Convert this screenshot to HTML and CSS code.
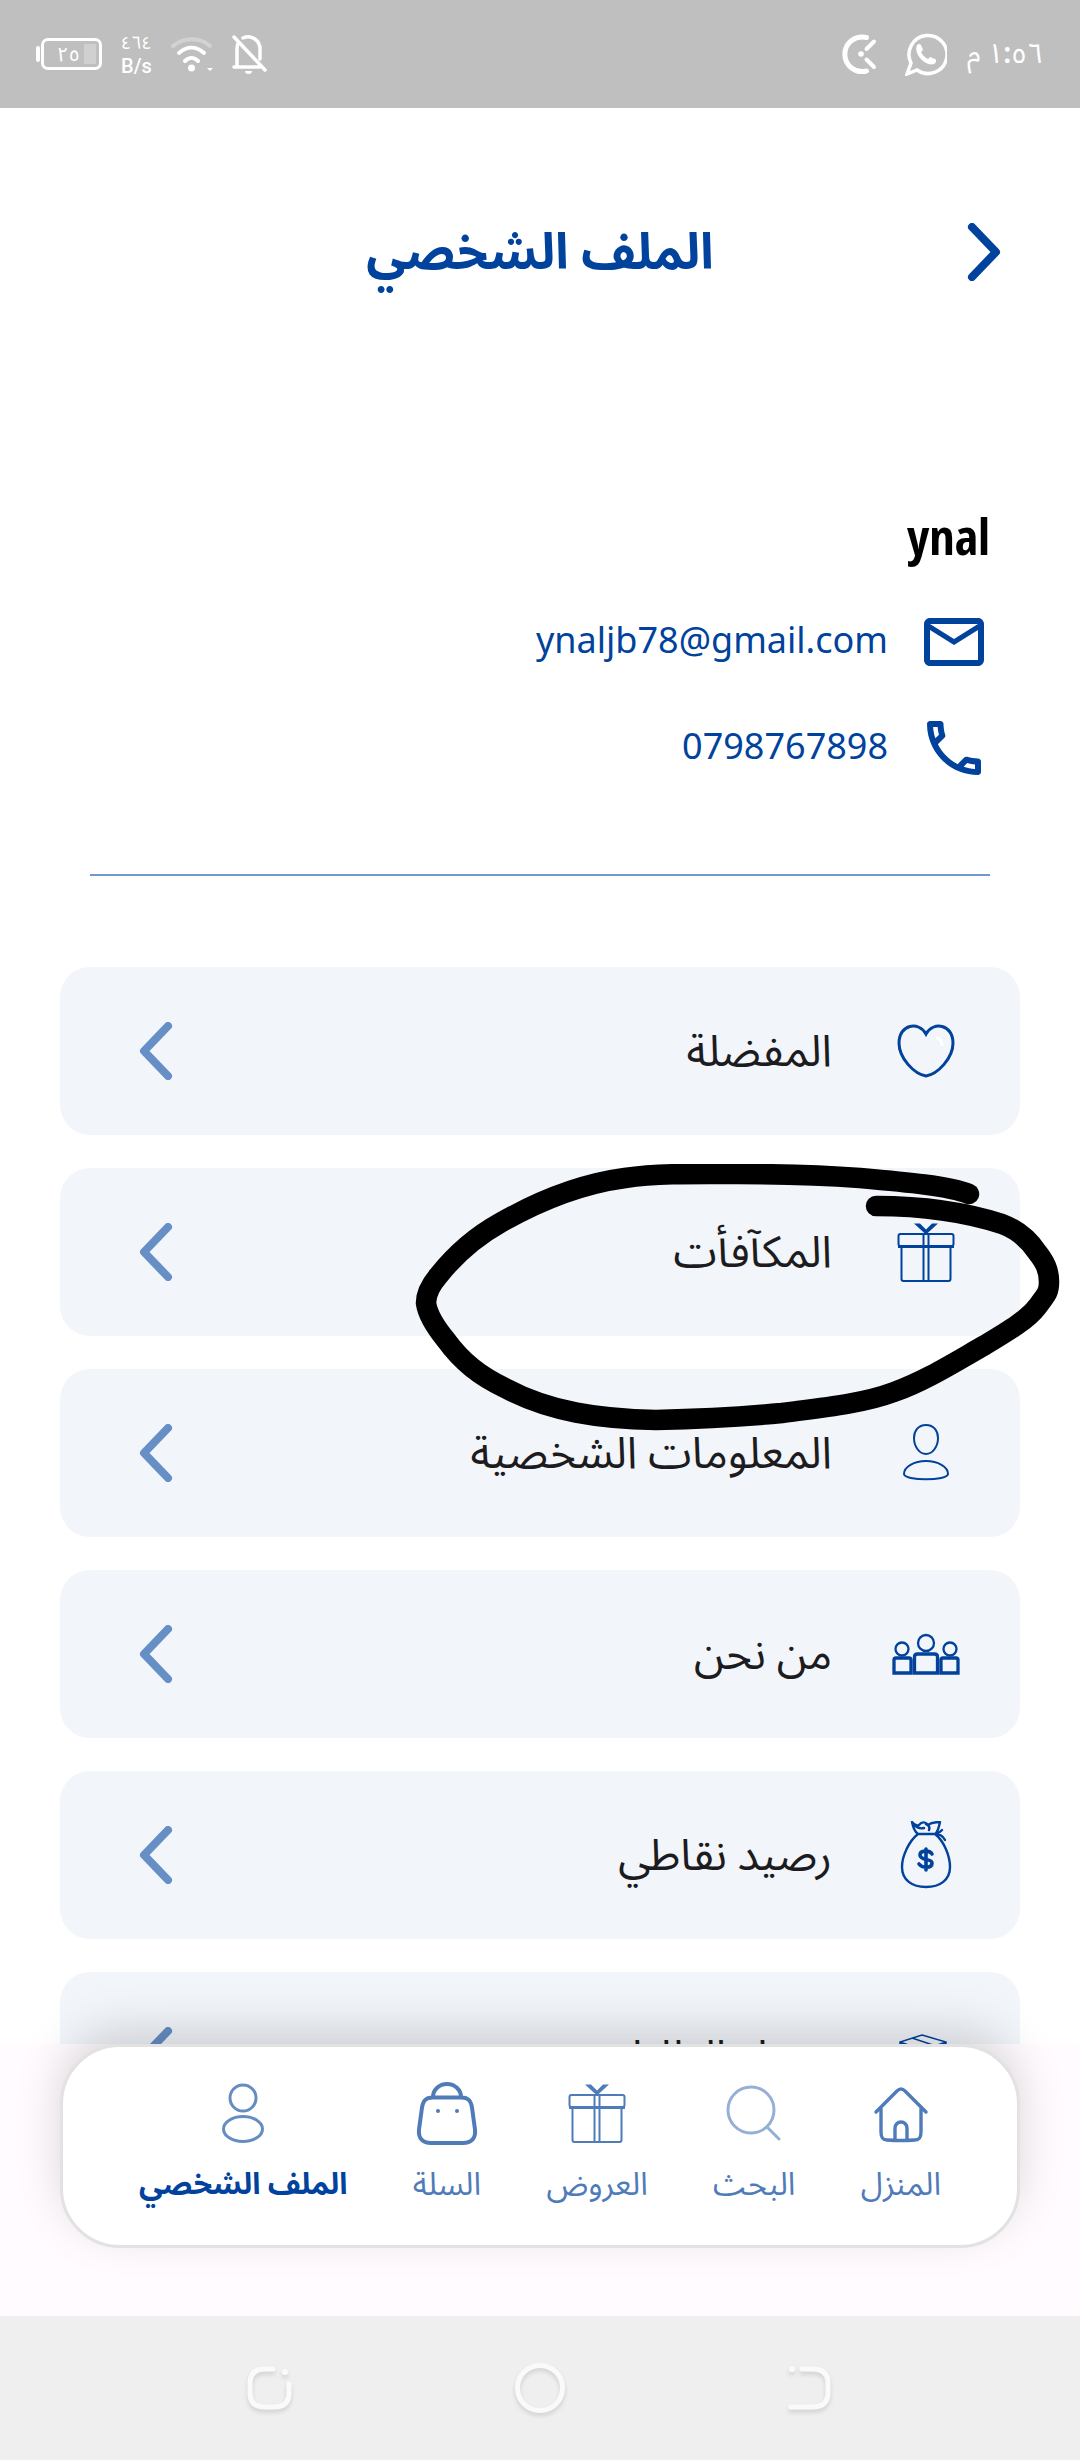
FILE: index.html
```html
<!DOCTYPE html>
<html lang="ar" dir="rtl">
<head>
<meta charset="utf-8">
<meta name="viewport" content="width=device-width, initial-scale=1">
<title>الملف الشخصي</title>
<link rel="stylesheet" href="styles.css">
</head>
<body>
<svg class="sprite" aria-hidden="true">
  <symbol id="chevron" viewBox="0 0 34 58"><path d="M29 4 5 29l24 25" fill="none" stroke="currentColor" stroke-width="8" stroke-linecap="round" stroke-linejoin="round"/></symbol>
  <symbol id="gift" viewBox="0 0 68 68"><g fill="none" stroke="currentColor" stroke-width="2"><path d="M22 5.500h6l6 6 6-6h6l-12 11z" fill="currentColor" stroke="none"/><rect x="6.500" y="16" width="55" height="12" rx="2"/><path d="M9.500 29v32a2 2 0 0 0 2 2h45a2 2 0 0 0 2-2V29z M31.500 16v47M36.500 16v47"/><path d="M6 28.500h56" stroke-width="3"/></g></symbol>
</svg>

<header class="status">
  <div class="status-group">
    <time class="clock">١:٥٦ م</time>
    <svg class="app-icon" width="42" height="44" viewBox="0 0 42 44" role="img" aria-label="واتساب"><path d="M2 42l4-11a19 19 0 1 1 6 7z" fill="none" stroke="#fff" stroke-width="3.500"/><path d="M12 13c2-2 4-1 5 2l1 3-2 2c2 4 4 5 7 7l2-2 5 2c2 1 1 4-1 5-8 3-21-10-17-19z" fill="#fff"/></svg>
    <svg class="app-icon" width="36" height="42" viewBox="0 0 36 42" aria-hidden="true"><g fill="none" stroke="#fff" stroke-width="5" stroke-linecap="round"><path d="M25.500 4.500a17.300 17.300 0 1 0 0 33.500"/><path d="M33 8.500l-7.500 7.500M25.500 26.500l7.500 7.500" stroke-width="4"/></g><circle cx="20" cy="21" r="2.800" fill="#fff"/></svg>
  </div>
  <div class="status-group tight">
    <svg width="36" height="40" viewBox="0 0 36 40" aria-hidden="true"><g fill="none" stroke="#fff" stroke-width="3.500" stroke-linecap="round"><path d="M2 33h26M5 32V15c0-3 .6-5 1.500-7M11 4c9-4 17 3 17 11v10M2 3l31 33"/></g><path d="M13 37h7a3.500 3 0 0 1-7 0z" fill="#fff"/></svg>
    <svg width="42" height="36" viewBox="0 0 42 36" aria-hidden="true"><g fill="none" stroke="#fff" stroke-width="4" stroke-linecap="round"><path d="M2 10c11-9 27-9 37 0" opacity=".3"/><path d="M8 17c8-7 17-7 25 0M14 25c4-4 9-4 13 0"/></g><circle cx="20.500" cy="32" r="3.500" fill="#fff"/><path d="M36 32h6l-3 3z" fill="#fff"/></svg>
    <span class="speed"><span class="speed-value">٤٦٤</span><span class="speed-unit">B/s</span></span>
    <span class="battery"><span class="battery-value">٢٥</span></span>
  </div>
</header>

<main class="screen">
  <div class="titlebar">
    <button class="back" type="button" aria-label="رجوع"><svg class="flip" width="34" height="58"><use href="#chevron"/></svg></button>
    <h1>الملف الشخصي</h1>
  </div>

  <section class="profile">
    <h2 dir="ltr">ynal</h2>
    <a class="contact" href="mailto:ynaljb78@gmail.com">
      <svg width="72" height="72" viewBox="0 0 24 24" fill="currentColor" aria-hidden="true"><path d="M22 6c0-1.100-.9-2-2-2H4c-1.100 0-2 .9-2 2v12c0 1.100.9 2 2 2h16c1.100 0 2-.9 2-2V6zm-2 0-8 5-8-5h16zm0 12H4V8l8 5 8-5v10z"/></svg>
      <span dir="ltr">ynaljb78@gmail.com</span>
    </a>
    <a class="contact" href="tel:0798767898">
      <svg width="72" height="72" viewBox="0 0 24 24" fill="currentColor" aria-hidden="true"><path d="M6.540 5c.06.890.21 1.760.45 2.590l-1.200 1.200c-.41-1.200-.67-2.470-.76-3.790h1.510m9.860 12.020c.85.240 1.720.390 2.600.450v1.490c-1.320-.09-2.590-.35-3.800-.75l1.200-1.190M7.500 3H4c-.55 0-1 .45-1 1 0 9.390 7.610 17 17 17 .55 0 1-.45 1-1v-3.490c0-.55-.45-1-1-1-1.240 0-2.450-.2-3.570-.57-.1-.04-.21-.05-.31-.05-.26 0-.51.1-.71.290l-2.200 2.200c-2.830-1.450-5.150-3.760-6.590-6.590l2.200-2.200c.28-.28.36-.67.25-1.020C8.700 6.450 8.500 5.250 8.500 4c0-.55-.45-1-1-1z"/></svg>
      <span dir="ltr">0798767898</span>
    </a>
  </section>

  <ul class="menu">
    <li><a class="row" href="#favorites">
      <svg width="68" height="68" viewBox="0 0 68 68" fill="none" aria-hidden="true"><path d="M34 17C27 4 7 7 7 26c0 15 15 31 27 33 12-2 27-18 27-33C61 7 41 4 34 17z" stroke="currentColor" stroke-width="3"/><path d="M44 21c4 0 6 3 6 8" stroke="#fff" stroke-width="3"/></svg>
      <span class="row-label">المفضلة</span><svg class="go" width="34" height="58"><use href="#chevron"/></svg></a></li>
    <li class="marked"><a class="row" href="#rewards">
      <svg width="68" height="68" aria-hidden="true"><use href="#gift"/></svg>
      <span class="row-label">المكآفأت</span><svg class="go" width="34" height="58"><use href="#chevron"/></svg></a>
      <svg class="pen" width="646" height="268" viewBox="414 1164 646 268" aria-hidden="true"><path d="M969 1194C950 1186 905 1182 860 1178C820 1175 790 1174 738 1174C700 1174 660 1173 625 1178C580 1184 535 1203 500 1223C475 1237 455 1255 439 1275Q426 1290 426 1303Q428 1318 446 1340C462 1362 480 1376 505 1388C550 1412 600 1419 656 1420C700 1419 740 1417 782 1413C820 1408 862 1404 894 1392C925 1381 955 1362 985 1345C1010 1330 1028 1319 1037 1307C1047 1294 1049 1292 1049 1282C1049 1270 1045 1262 1037 1252C1029 1240 1018 1230 1002 1224C965 1212 920 1206 876 1206" fill="none" stroke="#000" stroke-width="20.500" stroke-linecap="round" stroke-linejoin="round"/></svg></li>
    <li><a class="row" href="#info">
      <svg width="68" height="68" viewBox="0 0 68 68" fill="none" stroke="currentColor" stroke-width="2" aria-hidden="true"><path d="M34 6c8 0 12 6 12 13 0 8-5 16-12 16s-12-8-12-16c0-7 4-13 12-13zM34 42c12 0 22 6 22 13 0 7-44 7-44 0 0-7 10-13 22-13z"/></svg>
      <span class="row-label">المعلومات الشخصية</span><svg class="go" width="34" height="58"><use href="#chevron"/></svg></a></li>
    <li><a class="row" href="#about">
      <svg width="68" height="68" viewBox="0 0 68 68" fill="none" stroke="currentColor" stroke-width="2.300" aria-hidden="true"><circle cx="34" cy="23" r="8"/><circle cx="10" cy="29" r="6.500"/><circle cx="58" cy="29" r="6.500"/><g stroke-width="3.300"><path d="M22.500 53V37q0-3 3-3h17q3 0 3 3v16zM2 53V40q0-2 2-2h13q2 0 2 2v13zM49 53V40q0-2 2-2h13q2 0 2 2v13z"/></g></svg>
      <span class="row-label">من نحن</span><svg class="go" width="34" height="58"><use href="#chevron"/></svg></a></li>
    <li><a class="row" href="#points">
      <svg width="68" height="68" viewBox="0 0 68 68" fill="none" stroke="currentColor" stroke-width="2.400" stroke-linecap="round" stroke-linejoin="round" aria-hidden="true"><path d="M26 13h17c9 7 15 22 15 33 0 13-10 20-24 20S10 59 10 46c0-11 7-26 16-33zM26 13c-3-2-5-7-6-12 3 4 5 4 7 3 3-4 7-3 9 0 4-3 8-3 12-3-1 5-2 10-5 12M22 4c3 3 6 4 10 3M34 3c3 1 4 3 3 6M43 13c5 0 8 2 10 6M43 13c3 0 5-2 7-4"/><path d="M40 33c-2-4-12-4-12 1 0 6 12 3 12 8 0 6-10 5-13 1M34 28v21" stroke-width="3.600"/></svg>
      <span class="row-label">رصيد نقاطي</span><svg class="go" width="34" height="58"><use href="#chevron"/></svg></a></li>
    <li><a class="row" href="#orders">
      <svg width="68" height="68" viewBox="0 0 68 68" fill="none" stroke="currentColor" stroke-width="1.500" aria-hidden="true"><path d="M30 13 54 20v30L31 58 8 50V20zM8 20l23 8 23-8M31 28v30M20 16l24 8"/></svg>
      <span class="row-label">سجل الطلبات</span><svg class="go" width="34" height="58"><use href="#chevron"/></svg></a></li>
  </ul>
</main>

<div class="dock">
  <nav class="tabs">
    <a href="#home"><svg width="68" height="68" viewBox="0 0 68 68" fill="none" stroke="currentColor" stroke-width="3.400" stroke-linecap="round" aria-hidden="true"><path d="M9 33 30 12q4-4 8 0l21 21M14 29v24c0 6 2 8 6 8q14 1 28 0c4 0 6-2 6-8V29M28 61V49a6 6 0 0 1 12 0v12"/></svg><span>المنزل</span></a>
    <a href="#search"><svg class="faded" width="68" height="68" viewBox="0 0 68 68" fill="none" stroke="currentColor" stroke-width="3" stroke-linecap="round" aria-hidden="true"><circle cx="31" cy="31" r="23"/><path d="M47 48 59 60"/></svg><span>البحث</span></a>
    <a href="#offers"><svg width="68" height="68" aria-hidden="true"><use href="#gift"/></svg><span>العروض</span></a>
    <a href="#cart"><svg width="68" height="68" viewBox="0 0 68 68" fill="none" stroke="currentColor" stroke-width="4" aria-hidden="true"><path d="M20 18.500h28c8 0 10 4 11 10l3 22c1 9-4 13.500-12 13.500H18C10 64 5 59.500 6 50.500l3-22c1-6 3-10 11-10zM20 18a14 13 0 0 1 28 0"/><g fill="currentColor" stroke="none"><circle cx="25" cy="32" r="2"/><circle cx="44" cy="32" r="2"/></g></svg><span>السلة</span></a>
    <a href="#profile" aria-current="page"><svg width="68" height="68" viewBox="0 0 68 68" fill="none" stroke="currentColor" stroke-width="3" aria-hidden="true"><circle cx="34" cy="19" r="13"/><ellipse cx="34" cy="50" rx="19.500" ry="12.500"/></svg><span>الملف الشخصي</span></a>
  </nav>
</div>

<footer class="system">
  <button type="button" aria-label="السابق"><svg width="52" height="52" viewBox="0 0 52 52"><path d="M18 7h10c12 0 16 6 16 14v10c0 8-4 14-16 14H7"/><path d="M8 7v.1" stroke-width="6"/></svg></button>
  <button type="button" aria-label="الرئيسية"><svg width="52" height="52" viewBox="0 0 52 52"><circle cx="26" cy="26" r="22.500"/></svg></button>
  <button type="button" aria-label="التطبيقات"><svg width="52" height="52" viewBox="0 0 52 52"><path d="M29 7h-8C11 7 6 12 6 22v9c0 9 5 14 15 14h9c10 0 15-5 15-14v-9"/><path d="M41 10v.1" stroke-width="6"/></svg></button>
</footer>
</body>
</html>
```
FILE: styles.css
```css
* { box-sizing: border-box; }

body {
  margin: 0;
  height: 100vh;
  display: flex;
  flex-direction: column;
  background: #fff;
  color: #1c1b20;
  font-family: "Open Sans Condensed", "Noto Sans Arabic", "Noto Sans", "Open Sans", sans-serif;
}

svg { display: block; flex: none; }
a { color: inherit; text-decoration: none; }
h1, h2, ul { margin: 0; padding: 0; }
ul { list-style: none; }
button { padding: 0; border: 0; background: none; color: inherit; }
.sprite { width: 0; height: 0; position: absolute; }

.status {
  flex: none;
  height: 108px;
  padding: 0 37px;
  display: flex;
  align-items: center;
  justify-content: space-between;
  background: #bfbfbf;
  color: #fff;
}
.status-group { display: flex; align-items: center; gap: 20px; }
.tight { gap: 19px; }
.clock { padding-bottom: 4px; font-size: 28px; line-height: 40px; }
.app-icon + .app-icon { margin-inline-start: 8px; }
.speed { display: flex; flex-direction: column; align-items: center; font-size: 18px; line-height: 24px; }
.speed-unit { font-family: Roboto, sans-serif; font-weight: 500; font-size: 20px; }
.battery {
  width: 61px;
  height: 32px;
  margin-inline-end: 4px;
  padding-left: 8px;
  display: flex;
  align-items: center;
  justify-content: center;
  position: relative;
  border: 3px solid #fff;
  border-radius: 7px;
  background: linear-gradient(#d0d0d0, #d0d0d0) right 3px center / 12px 20px no-repeat;
  font-size: 20px;
  line-height: 24px;
}
.battery::before {
  content: "";
  position: absolute;
  left: -8px;
  width: 4px;
  height: 16px;
  border-radius: 2px;
  background: #fff;
}
.battery-value { padding-right: 14px; }

.screen { flex: 1; min-height: 0; overflow: hidden; }

.titlebar {
  height: 288px;
  padding: 0 79px;
  display: grid;
  grid-template-columns: 1fr auto 1fr;
  align-items: center;
  color: #00429c;
}
.back { justify-self: start; }
.flip { transform: scaleX(-1); }
h1 { padding-bottom: 4px; font-size: 50px; line-height: 80px; }

.profile {
  margin: 0 90px;
  padding-top: 104px;
  padding-bottom: 90px;
  display: flex;
  flex-direction: column;
  border-bottom: 2px solid #6f98cb;
}
h2 { color: #000; font-size: 50px; line-height: 72px; text-align: right; }
.contact {
  margin-top: 34px;
  display: flex;
  align-items: center;
  gap: 30px;
  color: #00429c;
  font-family: "Noto Sans Condensed", "Noto Sans", "Open Sans", sans-serif;
  font-size: 36px;
  line-height: 48px;
}
.contact span { padding-bottom: 4px; }

.menu { padding: 91px 60px 0; display: flex; flex-direction: column; gap: 33px; }
.row {
  height: 168px;
  padding: 0 60px 0 79px;
  display: flex;
  align-items: center;
  gap: 60px;
  border-radius: 30px;
  background: #f2f5fa;
}
.row > svg { color: #00429c; }
.row-label { flex: 1; padding-bottom: 4px; font-size: 44px; line-height: 72px; }
.row > .go { color: #668fc6; }
.marked { position: relative; }
.pen { position: absolute; top: -4px; right: -40px; }

.dock { flex: none; height: 272px; padding: 0 60px; background: #fffbff; }
.tabs {
  height: 204px;
  padding: 0 76px;
  position: relative;
  display: flex;
  justify-content: space-between;
  border: 3px solid #e2e2e2;
  border-radius: 60px;
  background: #fff;
  box-shadow: 0 -15px 50px -5px rgba(0, 0, 0, .18);
  color: #4f7cb8;
}
.tabs a { padding-top: 32px; display: flex; flex-direction: column; align-items: center; gap: 12px; font-size: 32px; line-height: 48px; }
.faded { opacity: .6; }
.tabs [aria-current] { color: #668dc2; }
.tabs [aria-current] span { color: #00429c; font-size: 30px; font-weight: 700; }

.system { flex: none; height: 144px; padding: 0 135px; display: grid; grid-template-columns: repeat(3, 1fr); place-items: center; background: #efefef; }
.system svg { fill: none; stroke: #fafafa; stroke-width: 5; stroke-linecap: round; filter: drop-shadow(0 3px 2px rgba(0, 0, 0, .12)); }
```
